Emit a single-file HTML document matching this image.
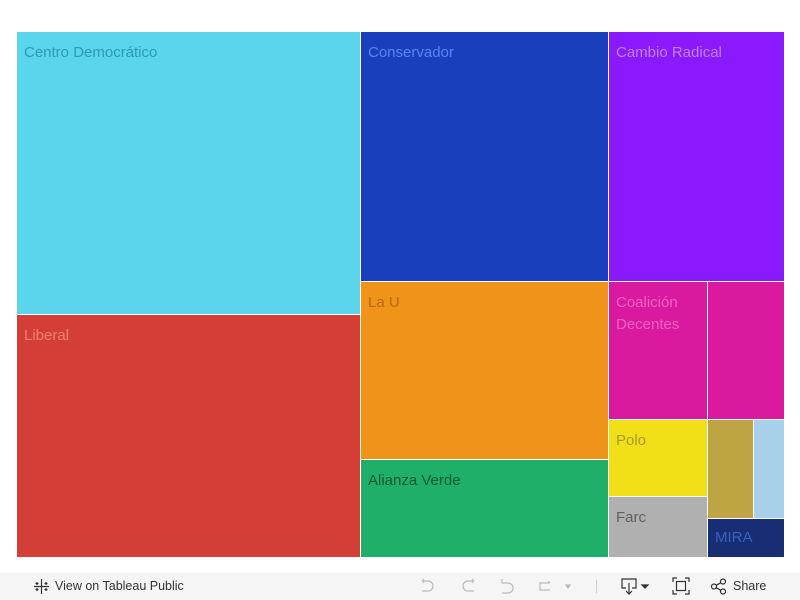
<!DOCTYPE html>
<html><head><meta charset="utf-8"><style>
body{margin:0;width:800px;height:600px;background:#fff;position:relative;overflow:hidden;font-family:"Liberation Sans",sans-serif}
.r{position:absolute;box-sizing:border-box}
.r span{position:absolute;left:7px;top:10px;font-size:15px;line-height:22px}
.tb{position:absolute;left:0;top:573px;width:800px;height:27px;background:#f5f5f5;font-size:12.5px;color:#333}
.tb .t{position:absolute;top:6px}
</style></head><body>
<div class="r" style="left:17px;top:32px;width:343px;height:282px;background:#5ad5ec"><span style="color:#2a9bb0">Centro Democrático</span></div>
<div class="r" style="left:17px;top:315px;width:343px;height:242px;background:#d33f37"><span style="color:#f08070">Liberal</span></div>
<div class="r" style="left:361px;top:32px;width:247px;height:249px;background:#1a3fbc"><span style="color:#5a85f0">Conservador</span></div>
<div class="r" style="left:361px;top:282px;width:247px;height:177px;background:#ef9319"><span style="color:#b86a10">La U</span></div>
<div class="r" style="left:361px;top:460px;width:247px;height:97px;background:#1faf69"><span style="color:#0e5a35">Alianza Verde</span></div>
<div class="r" style="left:609px;top:32px;width:175px;height:249px;background:#8a19fb"><span style="color:#c080ff">Cambio Radical</span></div>
<div class="r" style="left:609px;top:282px;width:98px;height:137px;background:#d91aa0"><span style="color:#f560c0">Coalición<br>Decentes</span></div>
<div class="r" style="left:708px;top:282px;width:76px;height:137px;background:#d91aa0"></div>
<div class="r" style="left:609px;top:420px;width:98px;height:76px;background:#f1df17"><span style="color:#a89a20">Polo</span></div>
<div class="r" style="left:609px;top:497px;width:98px;height:60px;background:#b0b0b0"><span style="color:#606060">Farc</span></div>
<div class="r" style="left:708px;top:420px;width:45px;height:98px;background:#bfa443"></div>
<div class="r" style="left:754px;top:420px;width:30px;height:98px;background:#a8d0ea"></div>
<div class="r" style="left:708px;top:519px;width:76px;height:38px;background:#172e75"><span style="color:#3a60c0;top:8px">MIRA</span></div>
<div class="tb">
<svg style="position:absolute;left:33px;top:5px" width="17" height="17" viewBox="0 0 17 17" stroke="#333" stroke-width="1.2" fill="none"><path d="M8.5 1v15M1 8.5h15M4 4v3M2.5 5.5h3M13 4v3M11.5 5.5h3M4 10v3M2.5 11.5h3M13 10v3M11.5 11.5h3"/></svg>
<span class="t" style="left:55px">View on Tableau Public</span>
<svg style="position:absolute;left:418px;top:5px" width="160" height="17" viewBox="0 0 160 17" stroke="#bbb" stroke-width="1.2" fill="none"><path d="M4 3h6a5 5 0 0 1 0 10H4M4 3l2-2M4 3l2 2"/><path d="M56 3h-6a5 5 0 0 0 0 10h6M56 3l-2-2M56 3l-2 2"/><path d="M84 1v4h6a5 5 0 0 1 0 10h-6"/><path d="M132 5h-10v7h10M132 5l-2-2"/><path d="M148 7l4 0-2 3z" fill="#bbb"/></svg>
<div style="position:absolute;left:596px;top:7px;width:1px;height:13px;background:#ccc"></div>
<svg style="position:absolute;left:620px;top:4px" width="32" height="19" viewBox="0 0 32 19" stroke="#333" stroke-width="1.2" fill="none"><path d="M6 11H2V2h14v9h-4M9 6v11M6 14l3 3 3-3"/><path d="M22 8h6l-3 3z" fill="#333"/></svg>
<svg style="position:absolute;left:672px;top:4px" width="18" height="18" viewBox="0 0 18 18" stroke="#333" stroke-width="1.2" fill="none"><path d="M1 5V1h4M13 1h4v4M17 13v4h-4M5 17H1v-4"/><rect x="4.5" y="4.5" width="9" height="9"/></svg>
<svg style="position:absolute;left:710px;top:5px" width="18" height="17" viewBox="0 0 18 17" stroke="#333" stroke-width="1.2" fill="none"><circle cx="4" cy="8.5" r="2.5"/><circle cx="13" cy="3.5" r="2.5"/><circle cx="13" cy="13.5" r="2.5"/><path d="M6.2 7.3l4.6-2.6M6.2 9.7l4.6 2.6"/></svg>
<span class="t" style="left:733px">Share</span>
</div>
</body></html>
